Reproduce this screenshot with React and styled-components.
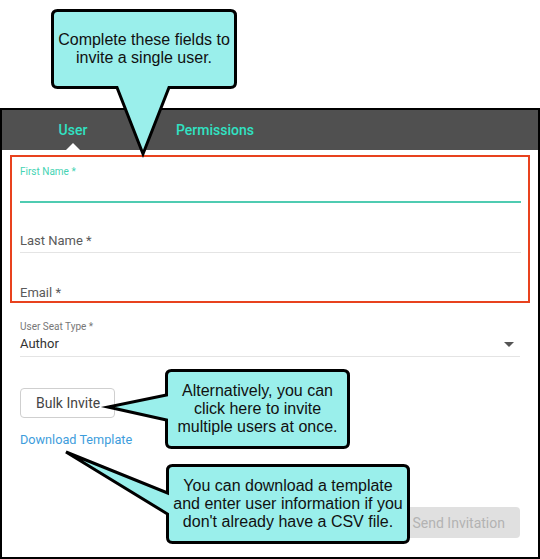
import React from "react";
import styled, { createGlobalStyle } from "styled-components";

const GlobalStyle = createGlobalStyle`
  html, body { margin: 0; padding: 0; background: #fff; }
  body { font-family: Roboto, "Liberation Sans", Arial, sans-serif; }
  * { box-sizing: border-box; }
`;

const Page = styled.div`
  position: relative;
  width: 540px;
  height: 559px;
  overflow: hidden;
  background: #fff;
  display: flex;
  flex-direction: column;
`;

const TopSpace = styled.div`
  height: 108px;
  flex: none;
`;

const Panel = styled.section`
  flex: 1;
  border: 2px solid #000;
  display: flex;
  flex-direction: column;
  background: #fff;
`;

const Header = styled.nav`
  height: 40px;
  background: #505050;
  display: flex;
  flex: none;
`;

const Tab = styled.div`
  position: relative;
  width: 142px;
  display: flex;
  align-items: center;
  justify-content: center;
  color: #30e2c3;
  font-size: 14px;
  font-weight: 500;
  &::after {
    content: "";
    display: ${(p) => (p.$active ? "block" : "none")};
    position: absolute;
    bottom: 0;
    left: 50%;
    margin-left: -7px;
    border-left: 7px solid transparent;
    border-right: 7px solid transparent;
    border-bottom: 7px solid #fff;
  }
`;

const Body = styled.div`
  flex: 1;
  padding: 0 18px;
  display: flex;
  flex-direction: column;
`;

const Highlight = styled.div`
  margin: 5px -10px 0 -10px;
  border: 2px solid #e8421e;
  padding: 0 7px 0 8px;
  display: flex;
  flex-direction: column;
`;

const Field = styled.div`
  display: flex;
  flex-direction: column;
  justify-content: flex-end;
  height: ${(p) => p.$h}px;
  padding-bottom: ${(p) => p.$pb}px;
  border-bottom: ${(p) => p.$line || "none"};
  flex: none;
`;

const SmallLabel = styled.div`
  font-size: 10px;
  line-height: 12px;
  color: ${(p) => p.$color || "#777"};
`;

const InputArea = styled.div`
  height: ${(p) => p.$h}px;
`;

const BigLabel = styled.div`
  font-size: 13px;
  line-height: 16px;
  color: #5a5a5a;
`;

const ValueRow = styled.div`
  margin-top: 3px;
  display: flex;
  align-items: center;
  justify-content: space-between;
  padding-right: 6px;
  font-size: 13px;
  line-height: 16px;
  color: #333;
`;

const Caret = styled.span`
  width: 0;
  height: 0;
  border-left: 5px solid transparent;
  border-right: 5px solid transparent;
  border-top: 5px solid #555;
`;

const OutlineButton = styled.button`
  align-self: flex-start;
  margin-top: 31px;
  height: 30px;
  padding: 0 14px 0 15px;
  border: 1px solid #cfcfcf;
  border-radius: 4px;
  background: #fff;
  color: #444;
  font-family: Roboto, sans-serif;
  font-size: 14px;
`;

const LinkText = styled.a`
  align-self: flex-start;
  margin-top: 14px;
  font-size: 12.7px;
  line-height: 16px;
  color: #3d9ddc;
  text-decoration: none;
`;

const FilledButton = styled.button`
  align-self: flex-end;
  margin-top: 59px;
  height: 31px;
  padding: 0 15px;
  border: none;
  border-radius: 4px;
  background: #e0e0e0;
  color: #b3b3b3;
  font-family: Roboto, sans-serif;
  font-size: 14px;
`;

const CalloutBox = styled.div`
  position: absolute;
  left: ${(p) => p.$x}px;
  top: ${(p) => p.$y}px;
  width: ${(p) => p.$w}px;
  height: ${(p) => p.$h}px;
  display: flex;
  align-items: center;
  justify-content: center;
  z-index: 5;
`;

const CalloutShape = styled.svg`
  position: absolute;
  left: 0;
  top: 0;
  overflow: visible;
`;

const CalloutText = styled.div`
  position: relative;
  font-family: "Liberation Sans", Arial, sans-serif;
  font-size: 16px;
  line-height: 18px;
  color: #111;
  text-align: center;
  white-space: pre-line;
`;

function calloutPath(w, h, r, side, a, b, tx, ty) {
  const s = 1.5;
  const x0 = s, y0 = s, x1 = w - s, y1 = h - s;
  let d = `M ${x0 + r} ${y0} H ${x1 - r} Q ${x1} ${y0} ${x1} ${y0 + r} V ${y1 - r} Q ${x1} ${y1} ${x1 - r} ${y1} `;
  if (side === "bottom") d += `H ${b} L ${tx} ${ty} L ${a} ${y1} `;
  d += `H ${x0 + r} Q ${x0} ${y1} ${x0} ${y1 - r} `;
  if (side === "left") d += `V ${b} L ${tx} ${ty} L ${x0} ${a} `;
  d += `V ${y0 + r} Q ${x0} ${y0} ${x0 + r} ${y0} Z`;
  return d;
}

function Callout({ x, y, w, h, side, a, b, tx, ty, children }) {
  return (
    <CalloutBox $x={x} $y={y} $w={w} $h={h}>
      <CalloutShape width={w} height={h} viewBox={`0 0 ${w} ${h}`}>
        <path
          d={calloutPath(w, h, 5, side, a, b, tx, ty)}
          fill="#9aefeb"
          stroke="#000"
          strokeWidth="3"
          strokeLinejoin="miter"
          strokeMiterlimit="10"
        />
      </CalloutShape>
      <CalloutText>{children}</CalloutText>
    </CalloutBox>
  );
}

export default function App() {
  return (
    <>
      <GlobalStyle />
      <Page>
        <TopSpace />
        <Panel>
          <Header>
            <Tab $active>User</Tab>
            <Tab>Permissions</Tab>
          </Header>
          <Body>
            <Highlight>
              <Field $h={46} $pb={0} $line="2px solid #4fcbb1">
                <SmallLabel $color="#45d3b3">First Name *</SmallLabel>
                <InputArea $h={23} />
              </Field>
              <Field $h={50} $pb={3} $line="1px solid #e4e4e4">
                <BigLabel>Last Name *</BigLabel>
              </Field>
              <Field $h={48} $pb={0}>
                <BigLabel>Email *</BigLabel>
              </Field>
            </Highlight>
            <Field $h={54} $pb={4} $line="1px solid #e4e4e4">
              <SmallLabel>User Seat Type *</SmallLabel>
              <ValueRow>
                <span>Author</span>
                <Caret />
              </ValueRow>
            </Field>
            <OutlineButton>Bulk Invite</OutlineButton>
            <LinkText href="#">Download Template</LinkText>
            <FilledButton>Send Invitation</FilledButton>
          </Body>
        </Panel>
        <Callout x={51} y={9} w={186} h={80} side="bottom" a={66} b={118} tx={92} ty={145}>
          {"Complete these fields to\ninvite a single user."}
        </Callout>
        <Callout x={165} y={369} w={185} h={80} side="left" a={26} b={51} tx={-57} ty={38}>
          {"Alternatively, you can\nclick here to invite\nmultiple users at once."}
        </Callout>
        <Callout x={166} y={464} w={244} h={80} side="left" a={29} b={50} tx={-100} ty={-12}>
          {"You can download a template\nand enter user information if you\ndon't already have a CSV file."}
        </Callout>
      </Page>
    </>
  );
}
